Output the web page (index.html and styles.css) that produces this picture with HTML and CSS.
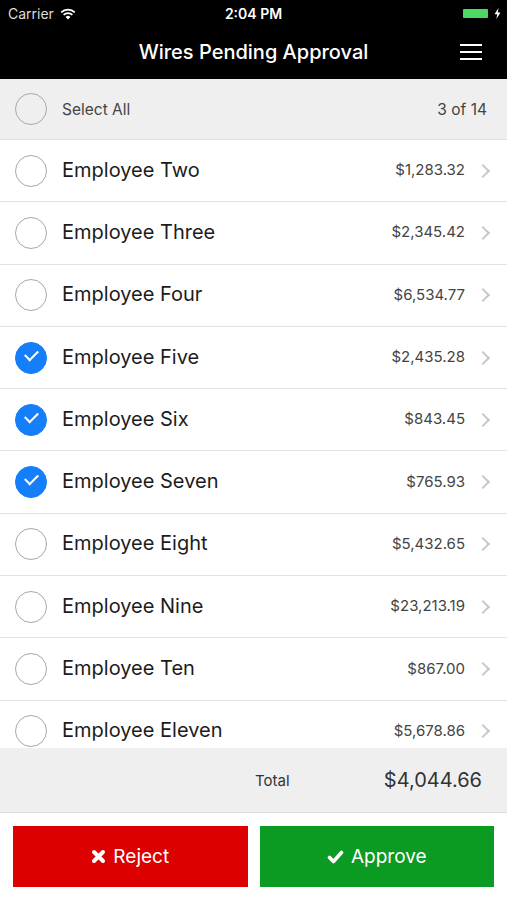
FILE: index.html
```html
<!DOCTYPE html>
<html lang="en">
<head>
<meta charset="UTF-8">
<meta name="viewport" content="width=device-width, initial-scale=1.0">
<title>Wires Pending Approval</title>
<link rel="stylesheet" href="styles.css">
</head>
<body>
    <header class="top">
        <div class="status">
            <div class="status-left">
                <span>Carrier</span>
                <svg class="wifi" width="16" height="12" viewBox="0 0 16 12">
                    <path d="M8 11.5 L5.6 8.9 A3.4 3.4 0 0 1 10.4 8.9 Z" fill="#fff"/>
                    <path d="M3.6 6.9 A6.2 6.2 0 0 1 12.4 6.9" stroke="#fff" stroke-width="1.8" fill="none"/>
                    <path d="M1.2 4.4 A9.6 9.6 0 0 1 14.8 4.4" stroke="#fff" stroke-width="1.8" fill="none"/>
                </svg>
            </div>
            <div class="status-time">2:04 PM</div>
            <div class="status-right">
                <span class="battery"></span>
                <svg width="7" height="11" viewBox="0 0 7 11">
                    <path d="M4.5 0 L0.5 6.2 H3.2 L2.4 11 L6.5 4.6 H3.8 Z" fill="#fff"/>
                </svg>
            </div>
        </div>
        <div class="navbar">
            <h1>Wires Pending Approval</h1>
            <button class="menu" aria-label="Menu">
                <span></span><span></span><span></span>
            </button>
        </div>
    </header>

    <div class="select-all">
        <span class="check"></span>
        <span class="select-label">Select All</span>
        <span class="count">3 of 14</span>
    </div>

    <ul class="list">
        <li class="row"><span class="check"></span><span class="name">Employee Two</span><span class="amount">$1,283.32</span><span class="chevron"></span></li>
        <li class="row"><span class="check"></span><span class="name">Employee Three</span><span class="amount">$2,345.42</span><span class="chevron"></span></li>
        <li class="row"><span class="check"></span><span class="name">Employee Four</span><span class="amount">$6,534.77</span><span class="chevron"></span></li>
        <li class="row"><span class="check on"></span><span class="name">Employee Five</span><span class="amount">$2,435.28</span><span class="chevron"></span></li>
        <li class="row"><span class="check on"></span><span class="name">Employee Six</span><span class="amount">$843.45</span><span class="chevron"></span></li>
        <li class="row"><span class="check on"></span><span class="name">Employee Seven</span><span class="amount">$765.93</span><span class="chevron"></span></li>
        <li class="row"><span class="check"></span><span class="name">Employee Eight</span><span class="amount">$5,432.65</span><span class="chevron"></span></li>
        <li class="row"><span class="check"></span><span class="name">Employee Nine</span><span class="amount">$23,213.19</span><span class="chevron"></span></li>
        <li class="row"><span class="check"></span><span class="name">Employee Ten</span><span class="amount">$867.00</span><span class="chevron"></span></li>
        <li class="row"><span class="check"></span><span class="name">Employee Eleven</span><span class="amount">$5,678.86</span><span class="chevron"></span></li>
    </ul>

    <div class="total">
        <span class="total-label">Total</span>
        <span class="total-amount">$4,044.66</span>
    </div>

    <div class="actions">
        <button class="btn reject">
            <svg width="15" height="15" viewBox="0 0 15 15">
                <path d="M3 3 L12 12 M12 3 L3 12" stroke="#fff" stroke-width="4" stroke-linecap="round"/>
            </svg>
            Reject
        </button>
        <button class="btn approve">
            <svg width="17" height="14" viewBox="0 0 17 14">
                <path d="M2.5 7.5 L6.5 11.5 L14.5 2.5" stroke="#fff" stroke-width="3.6" fill="none" stroke-linecap="round" stroke-linejoin="round"/>
            </svg>
            Approve
        </button>
    </div>
</body>
</html>
```

FILE: styles.css
```css
* {
    margin: 0;
    padding: 0;
    box-sizing: border-box;
}
body {
    font-family: Inter, "Liberation Sans", sans-serif;
    width: 507px;
    height: 900px;
    display: flex;
    flex-direction: column;
    background-color: #fff;
    overflow: hidden;
}
.top {
    background-color: #000;
    color: #fff;
    height: 79px;
}
.status {
    height: 27px;
    display: flex;
    align-items: center;
    justify-content: space-between;
    padding: 0 6px 0 8px;
    font-size: 14px;
    position: relative;
}
.status-left {
    display: flex;
    align-items: center;
    gap: 6px;
    color: #ddd;
}
.status-time {
    position: absolute;
    left: 0;
    right: 0;
    text-align: center;
    font-weight: 600;
}
.status-right {
    display: flex;
    align-items: center;
    gap: 6px;
}
.battery {
    width: 25px;
    height: 9px;
    background-color: #4cd964;
    border-radius: 1px;
}
.navbar {
    height: 52px;
    display: flex;
    align-items: center;
    justify-content: center;
    position: relative;
}
.navbar h1 {
    font-size: 20px;
    font-weight: 500;
    margin-top: -2px;
}
.menu {
    position: absolute;
    right: 25px;
    top: 17px;
    width: 22px;
    background: none;
    border: none;
    display: flex;
    flex-direction: column;
    gap: 5px;
}
.menu span {
    display: block;
    height: 2px;
    background-color: #fff;
}
.select-all {
    height: 61px;
    background-color: #efefef;
    border-bottom: 1px solid #e0e0e0;
    display: flex;
    align-items: center;
    padding: 0 20px 0 15px;
    font-size: 15.5px;
    color: #444;
}
.select-label {
    flex: 1;
}
.check {
    width: 32px;
    height: 32px;
    border: 1.5px solid #a8a8a8;
    border-radius: 50%;
    margin-right: 15px;
    flex-shrink: 0;
    position: relative;
}
.check.on {
    background-color: #157efb;
    border-color: #157efb;
}
.check.on::after {
    content: "";
    position: absolute;
    left: 9px;
    top: 7px;
    width: 11px;
    height: 6px;
    border-left: 2px solid #fff;
    border-bottom: 2px solid #fff;
    transform: rotate(-45deg);
}
.list {
    list-style: none;
    flex: 1;
    overflow: hidden;
}
.row {
    height: 62.3px;
    display: flex;
    align-items: center;
    padding: 0 19px 0 15px;
    border-bottom: 1px solid #e3e3e3;
}
.name {
    flex: 1;
    font-size: 20px;
    color: #1c1c1c;
    margin-top: -2px;
}
.amount {
    font-size: 15px;
    color: #444;
    margin-top: -2px;
}
.chevron {
    width: 10px;
    height: 10px;
    border-top: 2px solid #c7c7cc;
    border-right: 2px solid #c7c7cc;
    transform: rotate(45deg);
    margin-left: 13px;
}
.total {
    height: 65px;
    background-color: #efefef;
    border-bottom: 1px solid #ddd;
    display: flex;
    align-items: center;
    padding-left: 255px;
    padding-right: 25px;
}
.total-label {
    flex: 1;
    font-size: 15px;
    color: #333;
}
.total-amount {
    font-size: 20px;
    color: #333;
}
.actions {
    height: 87px;
    display: flex;
    gap: 12px;
    padding: 13px 13px 0;
}
.btn {
    flex: 1;
    height: 61px;
    border: none;
    color: #fff;
    font-family: inherit;
    font-size: 19px;
    display: flex;
    align-items: center;
    justify-content: center;
    gap: 7px;
}
.reject {
    background-color: #dc0000;
}
.approve {
    background-color: #0b9a22;
}
```
